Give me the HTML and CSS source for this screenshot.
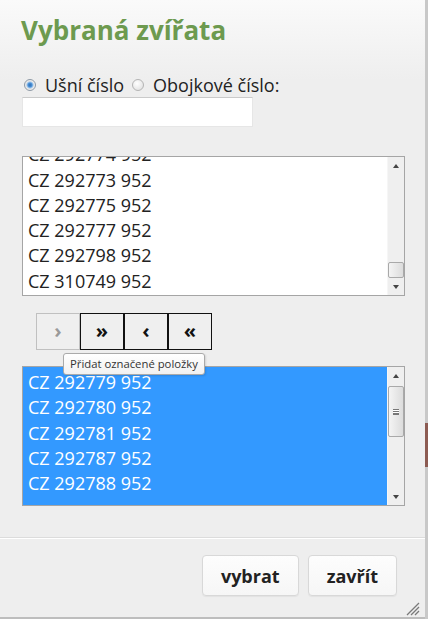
FILE: index.html
```html
<!DOCTYPE html>
<html lang="cs">
<head>
    <meta charset="UTF-8">
    <meta name="viewport" content="width=device-width, initial-scale=1.0">
    <title>Vybraná zvířata</title>
    <link rel="stylesheet" href="styles.css">
</head>
<body>
    <div class="dialog">
        <h1>Vybraná zvířata</h1>

        <div class="dialog-body">
            <div class="id-type">
                <label class="first"><input type="radio" name="idtype" checked> Ušní číslo</label>
                <label><input type="radio" name="idtype"> Obojkové číslo:</label>
            </div>
            <input type="text" class="search">

            <!-- available animals, scrolled to the end -->
            <div class="listbox">
                <div class="list-items at-end">
                    <div class="item">CZ 292774 952</div>
                    <div class="item">CZ 292773 952</div>
                    <div class="item">CZ 292775 952</div>
                    <div class="item">CZ 292777 952</div>
                    <div class="item">CZ 292798 952</div>
                    <div class="item">CZ 310749 952</div>
                </div>
                <div class="scrollbar">
                    <span class="arrow up"></span>
                    <div class="track at-end"><span class="thumb"></span></div>
                    <span class="arrow down"></span>
                </div>
            </div>

            <div class="move-buttons">
                <button class="move-btn" disabled>&rsaquo;</button>
                <button class="move-btn">&raquo;</button>
                <button class="move-btn">&lsaquo;</button>
                <button class="move-btn">&laquo;</button>
                <div class="tooltip">Přidat označené položky</div>
            </div>

            <!-- chosen animals -->
            <div class="listbox selected-list">
                <div class="list-items selected">
                    <div class="item">CZ 292779 952</div>
                    <div class="item">CZ 292780 952</div>
                    <div class="item">CZ 292781 952</div>
                    <div class="item">CZ 292787 952</div>
                    <div class="item">CZ 292788 952</div>
                </div>
                <div class="scrollbar">
                    <span class="arrow up"></span>
                    <div class="track"><span class="thumb big"><span class="grip"></span></span></div>
                    <span class="arrow down"></span>
                </div>
            </div>
        </div>

        <div class="footer">
            <button class="action-btn">vybrat</button>
            <button class="action-btn">zavřít</button>
        </div>

        <span class="resize-handle">
            <svg width="15" height="15" viewBox="0 0 15 15">
                <path d="M14 2 L2 14 M14 6 L6 14 M14 10 L10 14" stroke="#7a7a7a" stroke-width="1.3" fill="none"/>
            </svg>
        </span>
    </div>
    <div class="backdrop"><span class="backdrop-mark"></span></div>
</body>
</html>
```

FILE: styles.css
```css
body {
    margin: 0;
    padding: 0;
    display: flex;
    height: 619px;
    overflow: hidden;
    font-family: "Open Sans", "DejaVu Sans", sans-serif;
    background-color: #cfcfcf;
}

.dialog {
    position: relative;
    width: 425px;
    height: 617px;
    border-bottom: 2px solid #bdbdbd;
    background: linear-gradient(#fafafa, #eeeeee 80px, #eeeeee);
}

.dialog h1 {
    margin: 0;
    padding: 13px 21px 0;
    font-size: 26px;
    line-height: 34px;
    font-weight: 700;
    color: #6d9a4f;
}

.dialog-body {
    padding: 0 22px;
}

.id-type {
    display: flex;
    align-items: center;
    margin-top: 27px;
    font-size: 18px;
    line-height: 22px;
    color: #222;
}

.id-type label {
    display: inline-flex;
    align-items: center;
}

.id-type label.first {
    margin-right: 6px;
}

.id-type input {
    appearance: none;
    width: 12px;
    height: 12px;
    margin: 0 9px 0 2px;
    border: 1px solid #b4b4b4;
    border-radius: 50%;
    background: radial-gradient(circle at 40% 35%, #ffffff, #dcdcdc);
    box-sizing: border-box;
}

.id-type input:checked {
    border-color: #8e9aa6;
    background: radial-gradient(circle, #2f6fb6 0, #4a90d6 2px, #9cc4ea 3px, #e8e8e8 4px, #f4f4f4 6px);
}

.search {
    display: block;
    width: 231px;
    height: 30px;
    margin: 1px 0 0;
    padding: 0;
    border: 1px solid #e6e6e6;
    border-top-color: #cacaca;
    background: white;
    box-sizing: border-box;
}

.listbox {
    display: flex;
    width: 383px;
    height: 140px;
    margin-top: 29px;
    border: 1px solid #a5a5a5;
    background: white;
    box-sizing: border-box;
}

.list-items {
    flex: 1;
    display: flex;
    flex-direction: column;
    overflow: hidden;
    padding: 2px 0 1px;
    font-size: 18px;
    color: #222;
}

.list-items.at-end {
    justify-content: flex-end;
}

.list-items.selected {
    padding-top: 3px;
    background-color: #3399ff;
    color: white;
}

.item {
    flex-shrink: 0;
    height: 25.3px;
    line-height: 25.3px;
    padding-left: 5px;
    white-space: nowrap;
}

.scrollbar {
    display: flex;
    flex-direction: column;
    width: 17px;
    background-color: #efefef;
    border-left: 1px solid #f6f6f6;
    box-sizing: border-box;
}

.arrow {
    position: relative;
    flex-shrink: 0;
    height: 17px;
}

.arrow::before {
    content: "";
    position: absolute;
    left: 5px;
    width: 0;
    height: 0;
    border-left: 3px solid transparent;
    border-right: 3px solid transparent;
}

.arrow.up::before {
    top: 7px;
    border-bottom: 4px solid #444;
}

.arrow.down::before {
    top: 7px;
    border-top: 4px solid #444;
}

.track {
    flex: 1;
    display: flex;
    flex-direction: column;
    padding: 2px 0 0 0;
}

.track.at-end {
    justify-content: flex-end;
    padding: 0;
}

.thumb {
    display: flex;
    align-items: center;
    justify-content: center;
    height: 16px;
    border: 1px solid #a9a9a9;
    border-radius: 2px;
    background: linear-gradient(to right, #f4f4f4, #dcdcdc);
    box-sizing: border-box;
}

.thumb.big {
    height: 51px;
}

.grip {
    width: 6px;
    height: 6px;
    border-top: 1px solid #777;
    border-bottom: 1px solid #777;
    background: linear-gradient(#fff 0, #fff 1px, #777 1px, #777 2px, #fff 2px, #fff 3px, #777 3px, #777 4px, #fff 4px);
    box-sizing: border-box;
}

.move-buttons {
    position: relative;
    display: flex;
    margin: 17px 0 0 14px;
}

.move-btn {
    width: 44px;
    height: 37px;
    margin: 0;
    padding: 0 0 3px;
    border: 1px solid #111;
    background-color: #efefef;
    font-family: "Open Sans", sans-serif;
    font-size: 20px;
    font-weight: 700;
    color: #111;
}

.move-btn:disabled {
    border-color: #c0c0c0;
    color: #9a9a9a;
}

.tooltip {
    position: absolute;
    top: 40px;
    left: 27px;
    z-index: 2;
    padding: 0 6px;
    border: 1px solid #aaaaaa;
    border-radius: 3px;
    background: linear-gradient(#ffffff, #f1f1f1);
    box-shadow: 1px 1px 2px rgba(0, 0, 0, 0.12);
    font-size: 11.3px;
    line-height: 20px;
    color: #333;
    white-space: nowrap;
}

.selected-list {
    margin-top: 16px;
}

.footer {
    display: flex;
    justify-content: flex-end;
    gap: 9px;
    margin-top: 31px;
    padding: 17px 28px 0 0;
    border-top: 1px solid #dcdcdc;
    box-shadow: inset 0 1px 0 #ffffff;
}

.action-btn {
    height: 41px;
    padding: 0 18px;
    border: 1px solid #d8d8d8;
    border-radius: 4px;
    background: linear-gradient(#fdfdfd, #f6f6f6);
    box-shadow: 0 1px 1px rgba(0, 0, 0, 0.05);
    font-family: "Open Sans", sans-serif;
    font-size: 18px;
    font-weight: 700;
    color: #222;
}

.resize-handle {
    position: absolute;
    right: 5px;
    bottom: 3px;
    width: 15px;
    height: 15px;
}

.backdrop {
    flex: 1;
    background-color: #c8c8c8;
}

.backdrop-mark {
    display: block;
    height: 44px;
    margin-top: 423px;
    background-color: #8c5b52;
}
```
